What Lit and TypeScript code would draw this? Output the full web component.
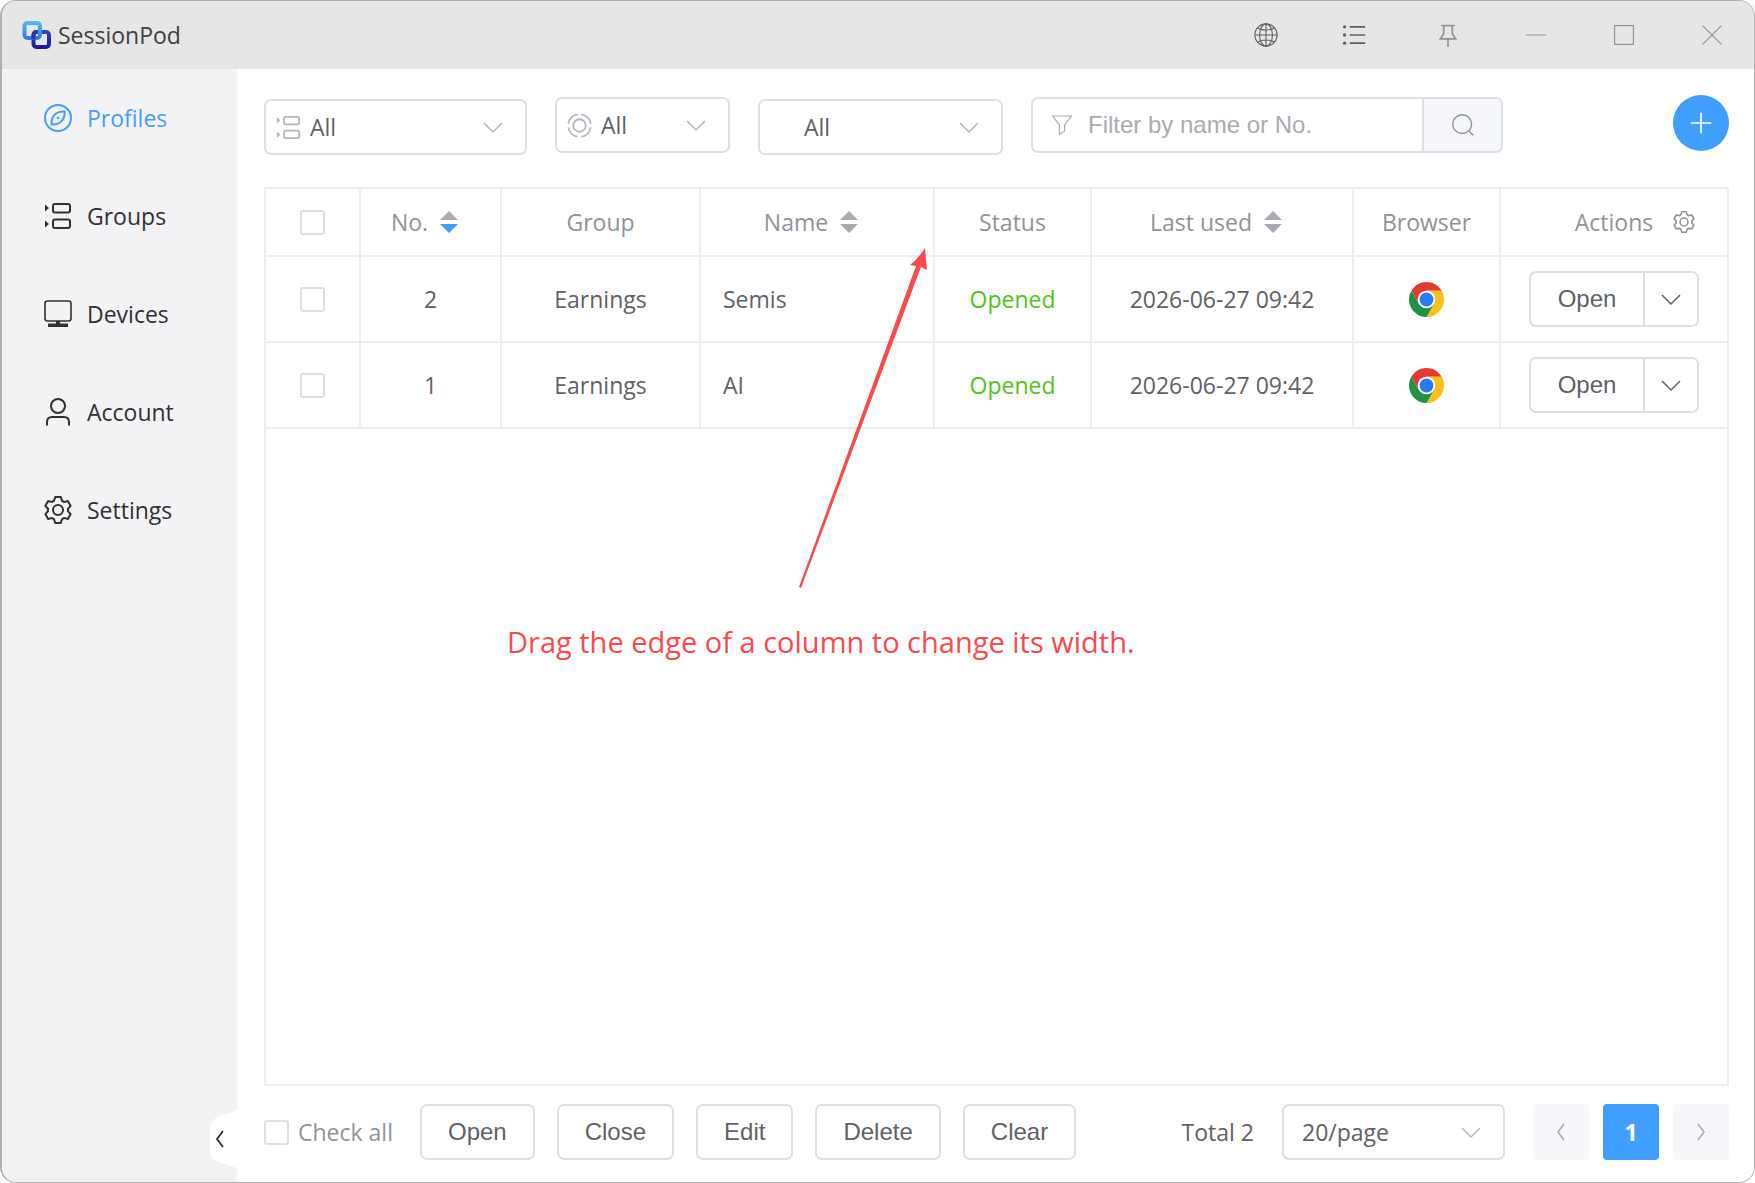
import { LitElement, html, css, svg, nothing } from "lit";
import { customElement, property, state } from "lit/decorators.js";

const line = (body: unknown, size = 28, weight = 2) => html`
  <svg width=${size} height=${size} viewBox="0 0 28 28" fill="none" stroke="currentColor"
    stroke-width=${weight} aria-hidden="true">${body}</svg>`;

const gearPath =
  "M600.704 64a32 32 0 0 1 30.464 22.208l35.2 109.376c14.784 7.232 28.928 15.36 42.432 24.512l112.384-24.192a32 32 0 0 1 34.432 15.36L944.32 364.8a32 32 0 0 1-4.032 37.504l-77.12 85.12a357.12 357.12 0 0 1 0 49.024l77.12 85.248a32 32 0 0 1 4.032 37.504l-88.704 153.6a32 32 0 0 1-34.432 15.296L708.8 803.904c-13.44 9.088-27.648 17.28-42.368 24.512l-35.264 109.376A32 32 0 0 1 600.704 960H423.296a32 32 0 0 1-30.464-22.208L357.696 828.48a351.616 351.616 0 0 1-42.56-24.64l-112.32 24.256a32 32 0 0 1-34.432-15.36L79.68 659.2a32 32 0 0 1 4.032-37.504l77.12-85.248a357.12 357.12 0 0 1 0-48.896l-77.12-85.248A32 32 0 0 1 79.68 364.8l88.704-153.6a32 32 0 0 1 34.432-15.296l112.32 24.256c13.568-9.152 27.776-17.408 42.56-24.64l35.2-109.312A32 32 0 0 1 423.232 64H600.64zm-23.424 64H446.72l-36.352 113.088-24.512 11.968a294.113 294.113 0 0 0-34.816 20.096l-22.656 15.36-116.224-25.088-65.28 113.152 79.68 88.192-1.92 27.136a293.12 293.12 0 0 0 0 40.192l1.92 27.136-79.808 88.192 65.344 113.152 116.224-25.024 22.656 15.296a294.113 294.113 0 0 0 34.816 20.096l24.512 11.968L446.72 896h130.688l36.48-113.152 24.448-11.904a288.282 288.282 0 0 0 34.752-20.096l22.592-15.296 116.288 25.024 65.28-113.152-79.744-88.192 1.92-27.136a293.12 293.12 0 0 0 0-40.256l-1.92-27.136 79.808-88.128-65.344-113.152-116.288 24.96-22.592-15.232a287.616 287.616 0 0 0-34.752-20.096l-24.448-11.904L577.344 128zM512 320a192 192 0 1 1 0 384 192 192 0 0 1 0-384zm0 64a128 128 0 1 0 0 256 128 128 0 0 0 0-256z";

const gear = (size: number) => html`
  <svg width=${size} height=${size} viewBox="64 64 896 896" fill="currentColor" aria-hidden="true">
    <path d=${gearPath}></path>
  </svg>`;

const groupsShape = svg`
  <path d="M1 2.5v7l4-3.500zM1 18.500v7l4-3.500z" fill="currentColor" stroke="none"/>
  <rect x="9" y="2" width="17" height="8.500" rx="2"/>
  <rect x="9" y="17.500" width="17" height="8.500" rx="2"/>`;

const icons = {
  compass: () => line(svg`
    <circle cx="14" cy="14" r="13"/>
    <path d="M20.500 7.500C14 6.800 7 10.500 7.500 20.500C17.500 21 21.200 14 20.500 7.500z"/>
    <circle cx="14" cy="14" r="1.300" fill="currentColor" stroke="none"/>`),
  groups: () => line(groupsShape, 28, 2),
  groupsSmall: () => line(groupsShape, 25, 2),
  monitor: () => line(svg`
    <rect x="1" y="1" width="26" height="20" rx="2.500"/>
    <path d="M12 21h4v2.500h8v3.500H4v-3.500h8z" fill="currentColor" stroke="none"/>`, 28, 1.6),
  user: () => line(svg`
    <circle cx="14" cy="8" r="7"/>
    <path d="M3 27.500v-3.500c0-3.500 1.500-5 5-5h12c3.500 0 5 1.500 5 5v3.500"/>`),
  settings: () => gear(28),
  target: () => line(svg`
    <circle cx="14" cy="14" r="7"/>
    <path d="M12 1.500A12.600 12.600 0 0 0 1.500 12M16 1.500A12.600 12.600 0 0 1 26.500 12M12 26.500A12.600 12.600 0 0 1 1.500 16M16 26.500A12.600 12.600 0 0 0 26.500 16"/>`, 25, 2),
  funnel: () => line(svg`<path d="M3 3.500h22l-8 10.500v7l-6 4v-11z"/>`, 24, 1.4),
  globe: () => line(svg`
    <circle cx="14" cy="14" r="13"/><ellipse cx="14" cy="14" rx="7.500" ry="13"/>
    <path d="M14 1v26M1 14h26M4.500 5.500c4 3.500 15 3.500 19 0M4.500 22.500c4-3.500 15-3.500 19 0"/>`, 24, 1.3),
  list: () => line(svg`
    <path d="M9 4.500h18M9 14h18M9 23.500h18"/>
    <g fill="currentColor" stroke="none"><circle cx="3" cy="4.500" r="2"/><circle cx="3" cy="14" r="2"/><circle cx="3" cy="23.500" r="2"/></g>`, 24, 2),
  pin: () => line(svg`<path d="M6 3h16M9 3v9.500l-4 6h18l-4-6V3M14 18.500V28"/>`, 24, 2),
  minimize: () => line(svg`<path d="M2 14h24"/>`, 24, 1.4),
  maximize: () => line(svg`<rect x="3" y="3" width="22" height="22"/>`, 24, 1.4),
  close: () => line(svg`<path d="M3 3l22 22M25 3L3 25"/>`, 24, 1.4),
  search: () => line(svg`<circle cx="13" cy="13" r="11"/><path d="M21 21l5 5"/>`, 24, 1.7),
  plus: () => line(svg`<path d="M14 2v24M2 14h24"/>`, 24, 2),
};

const chevron = (path = "M1 6l9 9 9-9", weight = 1.5) => html`
  <svg class="chevron" width="20" height="20" viewBox="0 0 20 20" fill="none" stroke="currentColor"
    stroke-width=${weight} aria-hidden="true"><path d=${path}></path></svg>`;

const chrome = html`
  <svg width="35" height="35" viewBox="0 0 48 48" role="img" aria-label="Chrome">
    <path d="M24 12h20.780A24 24 0 0 0 3.220 12L13.610 30z" fill="#e33b2e"></path>
    <path d="M34.390 30L24 48A24 24 0 0 0 44.780 12H24z" fill="#fbc116"></path>
    <path d="M13.610 30L3.220 12A24 24 0 0 0 24 48L34.390 30z" fill="#1f9246"></path>
    <circle cx="24" cy="24" r="12" fill="#fff"></circle>
    <circle cx="24" cy="24" r="9.500" fill="#2b7bf0"></circle>
  </svg>`;

const base = css`
  *, *::before, *::after { box-sizing: border-box; }
  svg { display: block; flex: none; }
  button, select, input { font: inherit; color: inherit; margin: 0; }
  button { cursor: pointer; padding: 0; }
`;

@customElement("app-select")
class AppSelect extends LitElement {
  @property() label = "";
  @property() icon = "";
  @property({ type: Array }) options: string[] = [];

  static styles = [base, css`
    :host { display: grid; align-items: center; height: 56px; color: #606266; }
    .field {
      grid-area: 1 / 1; width: 100%; height: 100%; padding: 0 48px 0 18px; appearance: none;
      background: #fff; border: 2px solid #dcdfe6; border-radius: 7px;
    }
    .with-icon { padding-left: 44px; }
    .lead, .chevron { grid-area: 1 / 1; color: #b4b7c0; pointer-events: none; z-index: 1; }
    .lead { justify-self: start; margin-left: 12px; }
    .chevron { justify-self: end; margin-right: 24px; }
    :host([indent]) .field { padding-left: 44px; }
  `];

  render() {
    return html`
      <select class="field ${this.icon ? "with-icon" : ""}" aria-label=${this.label}>
        ${this.options.map((o) => html`<option>${o}</option>`)}
      </select>
      ${this.icon ? html`<span class="lead">${icons[this.icon]()}</span>` : nothing}
      ${chevron()}`;
  }
}

interface Profile { no: number; group: string; name: string; status: string; used: string; }

@customElement("app-root")
class AppRoot extends LitElement {
  @state() profiles: Profile[] = [
    { no: 2, group: "Earnings", name: "Semis", status: "Opened", used: "2026-06-27 09:42" },
    { no: 1, group: "Earnings", name: "AI", status: "Opened", used: "2026-06-27 09:42" },
  ];

  static styles = [base, css`
    :host {
      display: block; background: #fff; color: #606266;
      font: 23px/32px "Open Sans", "Noto Sans", sans-serif;
    }
    .window {
      display: grid; grid-template: 68px 1fr / 235px minmax(0, 1fr); min-height: 100vh;
      border: 1px solid #b0b0b2; border-left-width: 2px; border-radius: 16px; overflow: hidden;
    }
    .titlebar {
      grid-column: 1 / -1; display: flex; align-items: center; justify-content: space-between;
      background: #e6e6e6; color: #3f4043;
    }
    .brand { display: flex; align-items: center; gap: 6px; padding-left: 20px; }
    .tools { display: flex; gap: 4px; color: #909399; }
    .tool {
      display: grid; place-items: center; width: 84px; height: 68px; background: none; border: 0;
    }
    .dark { color: #5f6165; }
    .spaced { margin-right: 6px; }

    .sidebar { position: relative; background: #f3f3f5; }
    .nav { display: flex; flex-direction: column; }
    .link {
      display: flex; align-items: center; gap: 15px; height: 98px; padding-left: 42px;
      color: #303133; text-decoration: none;
    }
    .glyph { display: grid; place-items: center; width: 28px; }
    .active { color: #409eff; }
    .collapse {
      position: absolute; right: 0; bottom: 14px; width: 27px; height: 58px; border: 0;
      display: grid; place-items: center; padding-right: 8px; color: #303133;
      background: #fff; clip-path: polygon(0 24%, 20% 14%, 100% 0, 100% 100%, 20% 88%, 0 78%);
    }

    .main { display: flex; flex-direction: column; padding: 26px 25px 22px 27px; background: #fff; }
    .toolbar { display: flex; align-items: center; gap: 28px; height: 60px; margin-bottom: 32px; }
    .low { align-self: flex-end; }
    .pick-group { width: 263px; }
    .pick-status { width: 175px; }
    .pick-browser { width: 245px; }
    .search {
      display: flex; width: 472px; height: 56px; overflow: hidden;
      border: 2px solid #dcdfe6; border-radius: 7px;
      font-family: "Liberation Sans", Arial, sans-serif; font-size: 24px;
    }
    .query { flex: 1; display: flex; align-items: center; gap: 14px; padding-left: 17px; color: #a8abb2; }
    .input { flex: 1; min-width: 0; border: 0; outline: 0; padding: 0; background: none; }
    .input::placeholder { color: #a8abb2; opacity: 1; }
    .go {
      display: grid; place-items: center; width: 79px; background: #f5f7fa; color: #909399;
      border: 0; border-left: 2px solid #dcdfe6;
    }
    .add {
      align-self: flex-start; margin-left: auto; display: grid; place-items: center;
      width: 56px; height: 56px; border: 0; border-radius: 50%; background: #409eff; color: #fff;
    }

    .panel { position: relative; flex: 1; border: 2px solid #ebeef5; }
    .grid { width: 100%; table-layout: fixed; border-collapse: separate; border-spacing: 0; }
    .grid th, .grid td {
      padding: 0; text-align: center; font-weight: 400;
      border-bottom: 2px solid #ebeef5; border-right: 2px solid #ebeef5;
    }
    .grid th:last-child, .grid td:last-child { border-right: 0; }
    .grid th { height: 68px; color: #909399; }
    .grid td { height: 86px; }
    .grid .left { text-align: left; padding-left: 22px; }
    .ok { color: #52c41a; }
    .box {
      appearance: none; display: block; width: 25px; height: 25px; margin: 0 auto;
      border: 2px solid #dcdfe6; border-radius: 3px; background: #fff;
    }
    .sort {
      display: inline-flex; align-items: center; gap: 12px; padding-right: 12px;
      background: none; border: 0;
    }
    .up, .down { fill: #a8abb2; }
    .current .down { fill: #409eff; }
    .actions { display: grid; grid-template-columns: 1fr auto 1fr; align-items: center; gap: 20px; }
    .columns { grid-column: 3; justify-self: start; border: 0; background: none; }
    .browser { display: grid; place-items: center; }
    .split, .action {
      border: 2px solid #dcdfe6; border-radius: 7px; background: #fff; height: 56px;
      font-family: "Liberation Sans", Arial, sans-serif; font-size: 24px;
    }
    .split { display: flex; width: 170px; margin: 0 auto; overflow: hidden; }
    .open { flex: 1; border: 0; background: none; }
    .more {
      display: grid; place-items: center; width: 54px; border: 0;
      border-left: 2px solid #dcdfe6; background: none;
    }

    .hint { position: absolute; top: 58px; left: 241px; color: #f94b4d; pointer-events: none; }
    .arrow { margin-left: 284px; }
    .hint-text { margin: 32px 0 0; font-size: 29px; line-height: 40px; }

    .footer { display: flex; align-items: center; gap: 22px; margin-top: 18px; }
    .check { display: flex; align-items: center; gap: 9px; color: #909399; margin-right: 5px; }
    .check .box { margin: 0; }
    .action { padding: 0 26px; }
    .total { margin-left: auto; margin-right: 6px; }
    .page-size { width: 223px; margin-right: 6px; }
    .pager { display: flex; gap: 14px; }
    .page {
      display: grid; place-items: center; width: 56px; height: 56px; border: 0;
      border-radius: 4px; background: #f5f7fa; color: #a8abb2;
    }
    .on { background: #409eff; color: #fff; font-weight: 700; }
  `];

  sortable(label: string, current = false) {
    return html`<button class="sort ${current ? "current" : ""}">${label}
      <svg width="18" height="22" viewBox="0 0 18 22" aria-hidden="true">
        <path class="up" d="M0 9l9-9 9 9z"></path><path class="down" d="M0 13h18l-9 9z"></path>
      </svg></button>`;
  }

  row(p: Profile) {
    return html`
      <tr>
        <td><input class="box" type="checkbox" aria-label="Select ${p.name}"></td>
        <td>${p.no}</td>
        <td>${p.group}</td>
        <td class="left">${p.name}</td>
        <td class="ok">${p.status}</td>
        <td>${p.used}</td>
        <td><div class="browser">${chrome}</div></td>
        <td>
          <div class="split">
            <button class="open">Open</button>
            <button class="more" aria-label="More actions">${chevron()}</button>
          </div>
        </td>
      </tr>`;
  }

  render() {
    const nav = [
      ["Profiles", "compass"], ["Groups", "groups"], ["Devices", "monitor"],
      ["Account", "user"], ["Settings", "settings"],
    ];
    const widths = [95, 141, 199, 234, 157, 262, 147, 226];
    return html`
      <div class="window">
        <header class="titlebar">
          <div class="brand">
            <svg width="30" height="30" viewBox="0 0 30 30" fill="none" stroke-width="4" aria-hidden="true">
              <defs>
                <linearGradient id="sky" x1="0" y1="0" x2="0" y2="1">
                  <stop offset="0" stop-color="#4cb8f5"></stop><stop offset="1" stop-color="#2f7fe0"></stop>
                </linearGradient>
                <linearGradient id="navy" x1="0" y1="0" x2="0" y2="1">
                  <stop offset="0" stop-color="#3040c8"></stop><stop offset="1" stop-color="#22189c"></stop>
                </linearGradient>
              </defs>
              <rect x="11.500" y="12" width="15.500" height="15" rx="3" stroke="url(#navy)"></rect>
              <rect x="2.500" y="3" width="15.500" height="15" rx="3" stroke="url(#sky)"></rect>
              <path d="M11.500 19.500v-4q0-3.500 3-3.500h1" stroke="#2a34b4"></path>
            </svg>
            <span>SessionPod</span>
          </div>
          <div class="tools">
            <button class="tool dark" aria-label="Language">${icons.globe()}</button>
            <button class="tool dark spaced" aria-label="Menu">${icons.list()}</button>
            <button class="tool" aria-label="Pin">${icons.pin()}</button>
            <button class="tool" aria-label="Minimize">${icons.minimize()}</button>
            <button class="tool" aria-label="Maximize">${icons.maximize()}</button>
            <button class="tool" aria-label="Close">${icons.close()}</button>
          </div>
        </header>

        <aside class="sidebar">
          <nav class="nav">
            ${nav.map(([label, icon], i) => html`
              <a class="link ${i === 0 ? "active" : ""}" href="#${label.toLowerCase()}">
                <span class="glyph">${icons[icon]()}</span>${label}</a>`)}
          </nav>
          <button class="collapse" aria-label="Collapse sidebar">${chevron("M13 2l-6 8 6 8", 1.8)}</button>
        </aside>

        <main class="main">
          <div class="toolbar">
            <app-select class="pick-group low" label="Group" icon="groupsSmall" .options=${["All"]}></app-select>
            <app-select class="pick-status" label="Status" icon="target" .options=${["All"]}></app-select>
            <app-select class="pick-browser low" label="Browser" indent .options=${["All"]}></app-select>
            <div class="search">
              <label class="query">${icons.funnel()}
                <input class="input" type="text" placeholder="Filter by name or No." aria-label="Filter by name or No.">
              </label>
              <button class="go" aria-label="Search">${icons.search()}</button>
            </div>
            <button class="add" aria-label="Add profile">${icons.plus()}</button>
          </div>

          <section class="panel">
            <table class="grid">
              <colgroup>${widths.map((w) => html`<col style="width:${w}px">`)}</colgroup>
              <thead>
                <tr>
                  <th><input class="box" type="checkbox" aria-label="Select all rows"></th>
                  <th>${this.sortable("No.", true)}</th>
                  <th>Group</th>
                  <th>${this.sortable("Name")}</th>
                  <th>Status</th>
                  <th>${this.sortable("Last used")}</th>
                  <th>Browser</th>
                  <th>
                    <div class="actions"><span></span><span>Actions</span>
                      <button class="columns" aria-label="Column settings">${gear(22)}</button></div>
                  </th>
                </tr>
              </thead>
              <tbody>${this.profiles.map((p) => this.row(p))}</tbody>
            </table>
            <div class="hint">
              <svg class="arrow" width="140" height="343" viewBox="0 0 140 343" aria-hidden="true">
                <path d="M8 340L125 19L119 18Q127 12 134 1L136 23L130 20L10 341z" fill="#f94b4d"></path>
              </svg>
              <p class="hint-text">Drag the edge of a column to change its width.</p>
            </div>
          </section>

          <footer class="footer">
            <label class="check"><input class="box" type="checkbox">Check all</label>
            ${["Open", "Close", "Edit", "Delete", "Clear"].map((t) => html`<button class="action">${t}</button>`)}
            <span class="total">Total 2</span>
            <app-select class="page-size" label="Page size" .options=${["20/page"]}></app-select>
            <div class="pager">
              <button class="page" aria-label="Previous page">${chevron("M13 2l-6 8 6 8")}</button>
              <button class="page on" aria-current="page">1</button>
              <button class="page" aria-label="Next page">${chevron("M7 2l6 8-6 8")}</button>
            </div>
          </footer>
        </main>
      </div>`;
  }
}
